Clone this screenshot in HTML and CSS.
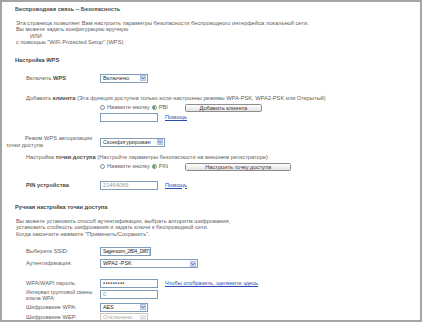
FILE: index.html
```html
<!DOCTYPE html>
<html>
<head lang="ru">
    <meta charset="UTF-8">
    <title>Беспроводная связь -- Безопасность</title>
    <link rel="stylesheet" href="styles.css">
</head>
<body>
<div class="frame">
    <div class="title">Беспроводная связь -- Безопасность</div>
    <div class="intro">
        Эта страница позволяет Вам настроить параметры безопасности беспроводного интерфейса локальной сети.<br>
        Вы можете задать конфигурацию вручную<br>
        <span class="or">ИЛИ</span><br>
        с помощью "WiFi Protected Setup" (WPS)
    </div>

    <div class="head wps-head">Настройка WPS</div>

    <div class="row r-wps">
        <span class="label">Включить <b>WPS</b></span>
        <span class="select w48"><span class="val">Включено</span><span class="arrow"><svg width="5" height="4" viewBox="0 0 5 4"><path d="M0.5 1 L2.5 3 L4.5 1" fill="none" stroke="#4d6185" stroke-width="1.2"/></svg></span></span>
    </div>

    <div class="line r-client">Добавить <b>клиента</b> (Эта функция доступна только если настроены режимы WPA-PSK, WPA2-PSK или Открытый)</div>
    <div class="row r-radio1">
        <span class="label"></span>
        <span class="radio"></span><span class="rtext">Нажмите кнопку</span>
        <span class="radio on"></span><span class="rtext">PBI</span>
        <span class="btn w77">Добавить клиента</span>
    </div>
    <div class="row r-pin1">
        <span class="label"></span>
        <span class="input"></span>
        <a class="help" href="#">Помощь</a>
    </div>

    <div class="row r-mode">
        <span class="label mode-label"><span class="first">Режим WPS авторизации</span><br>точки доступа</span>
        <span class="select w65"><span class="val">Сконфигурирован</span><span class="arrow"><svg width="5" height="4" viewBox="0 0 5 4"><path d="M0.5 1 L2.5 3 L4.5 1" fill="none" stroke="#4d6185" stroke-width="1.2"/></svg></span></span>
    </div>

    <div class="line r-ap">Настройка <b>точки доступа</b> (Настройте параметры безопасности на внешнем регистраторе)</div>
    <div class="row r-radio2">
        <span class="label"></span>
        <span class="radio"></span><span class="rtext">Нажмите кнопку</span>
        <span class="radio on"></span><span class="rtext">PIN</span>
        <span class="btn w106">Настроить точку доступа</span>
    </div>
    <div class="row r-pin2">
        <span class="label"><b>PIN устройства</b></span>
        <span class="input"><span class="grey">21464065</span></span>
        <a class="help" href="#">Помощь</a>
    </div>

    <div class="head manual-head">Ручная настройка точки доступа</div>
    <div class="intro manual">
        Вы можете установить способ аутентификации, выбрать алгоритм шифрования,<br>
        установить стойкость шифрования и задать ключи к беспроводной сети.<br>
        Когда закончите нажмите "Применить/Сохранить".
    </div>

    <div class="row r-ssid">
        <span class="label">Выберете SSID:</span>
        <span class="select w50"><span class="val dark narrow">Sagemcom_2804_1987</span><span class="arrow"><svg width="5" height="4" viewBox="0 0 5 4"><path d="M0.5 1 L2.5 3 L4.5 1" fill="none" stroke="#4d6185" stroke-width="1.2"/></svg></span></span>
    </div>
    <div class="row r-auth">
        <span class="label">Аутентификация:</span>
        <span class="select w98"><span class="val dark">WPA2 -PSK</span><span class="arrow"><svg width="5" height="4" viewBox="0 0 5 4"><path d="M0.5 1 L2.5 3 L4.5 1" fill="none" stroke="#4d6185" stroke-width="1.2"/></svg></span></span>
    </div>
    <div class="row r-pass">
        <span class="label">WPA/WAPI пароль:</span>
        <span class="input"><span class="dots">●●●●●●●●●</span></span>
        <a class="help" href="#">Чтобы отобразить, щелкните здесь</a>
    </div>
    <div class="row r-interval">
        <span class="label two">Интервал групповой смены<br>ключа WPA:</span>
        <span class="input"><span class="grey">0</span></span>
    </div>
    <div class="row r-wpa">
        <span class="label">Шифрование WPA:</span>
        <span class="select w48"><span class="val dark">AES</span><span class="arrow"><svg width="5" height="4" viewBox="0 0 5 4"><path d="M0.5 1 L2.5 3 L4.5 1" fill="none" stroke="#4d6185" stroke-width="1.2"/></svg></span></span>
    </div>
    <div class="row r-wep">
        <span class="label">Шифрование WEP:</span>
        <span class="select w48 off"><span class="val">Отключено</span><span class="arrow"><svg width="5" height="4" viewBox="0 0 5 4"><path d="M0.5 1 L2.5 3 L4.5 1" fill="none" stroke="#b8bfcc" stroke-width="1.2"/></svg></span></span>
    </div>
</div>
</body>
</html>
```

FILE: styles.css
```css
body{ margin: 0; padding: 0; background: #fff; font-family: "Liberation Sans", Arial, sans-serif; font-size: 5.7px; color: #5e5e5e;}
.frame{ box-sizing: border-box; width: 422px; height: 322px; border: 2px solid #a4a4a4; padding: 3.5px 0 0 13px; overflow: hidden; display: flex; flex-direction: column;}
.frame > *{ flex: none;}
b{ font-weight: bold; color: #4a4a4a;}
.title{ height: 7px; line-height: 7px; font-weight: bold; color: #4a4a4a;}
.intro{ margin-top: 7px; line-height: 6.5px; padding-left: 1px;}
.intro .or{ padding-left: 14px;}
.head{ height: 7px; line-height: 7px; font-weight: bold; color: #454545;}
.wps-head{ margin-top: 11.5px;}
.manual-head{ margin-top: 14px;}
.intro.manual{ margin-top: 6.5px;}
.line{ height: 7px; line-height: 7px; padding-left: 11px; white-space: nowrap;}
.row{ display: flex; align-items: center; line-height: 7px; white-space: nowrap;}
.label{ width: 74px; padding-left: 11px; flex: none;}
.label.two{ line-height: 6px; font-size: 5.2px;}
.mode-label{ width: 94px; margin-left: -9px; padding-left: 0;}
.mode-label .first{ padding-left: 19px;}

.r-wps{ height: 10px; margin-top: 9px;}
.r-client{ margin-top: 11.5px;}
.r-radio1{ height: 9px; margin-top: 1.5px;}
.r-pin1{ height: 10px; margin-top: 0.5px;}
.r-mode{ height: 14px; margin-top: 12.5px;}
.r-ap{ margin-top: 5px;}
.r-radio2{ height: 9px; margin-top: 1px;}
.r-pin2{ height: 10px; margin-top: 9px;}
.r-ssid{ height: 10px; margin-top: 9.5px;}
.r-auth{ height: 10px; margin-top: 2px;}
.r-pass{ height: 9px; margin-top: 10.5px;}
.r-interval{ height: 12px; margin-top: 0.5px;}
.r-wpa{ height: 9px; margin-top: 2px;}
.r-wep{ height: 9px; margin-top: 1.5px;}

.select{ box-sizing: border-box; height: 9px; border: 1px solid #7f9db9; background: #fff; display: inline-flex; align-items: center; justify-content: space-between; padding: 0 1px 0 2px; overflow: hidden;}
.select .val{ font-size: 5.7px; color: #333;}
.select .val.dark{ color: #1e1e1e; font-size: 5.4px; letter-spacing: -0.05px;}
.select .val.narrow{ font-size: 4.9px; letter-spacing: -0.35px;}
.select .arrow{ width: 6px; height: 6px; background: #c9d8f6; border: 0.5px solid #b2c3e6; box-sizing: border-box; display: flex; align-items: center; justify-content: center; flex: none;}
.select.off{ border-color: #c9c7ba;}
.select.off .val{ color: #a9a9a9;}
.select.off .arrow{ background: #eef0f4; border-color: #dde0e6;}
.w48{ width: 48px;}
.w50{ width: 51px;}
.w65{ width: 65px;}
.w98{ width: 98px;}

.input{ box-sizing: border-box; width: 58px; height: 9px; border: 1px solid #7f9db9; background: #fff; display: inline-flex; align-items: center; padding-left: 2px; flex: none;}
.input .grey{ color: #999;}
.input .dots{ font-size: 3.5px; letter-spacing: 0.3px; color: #222;}
.help{ margin-left: 7px; color: #2a4bb4; text-decoration: underline;}

.radio{ box-sizing: border-box; width: 5px; height: 5px; border: 0.7px solid #7a8898; border-radius: 50%; background: #fff; flex: none; display: flex; align-items: center; justify-content: center;}
.radio.on::after{ content: ""; width: 2.4px; height: 2.4px; border-radius: 50%; background: #3fa53f;}
.rtext{ margin: 0 2px 0 2px;}
.btn{ box-sizing: border-box; height: 8px; margin-left: 15px; border: 1px solid #8c8c8c; border-radius: 1.5px; background: linear-gradient(#ffffff, #e2e2e2); color: #3a3a3a; text-align: center; line-height: 6px;}
.w77{ width: 77px;}
.w106{ width: 106px;}
```
